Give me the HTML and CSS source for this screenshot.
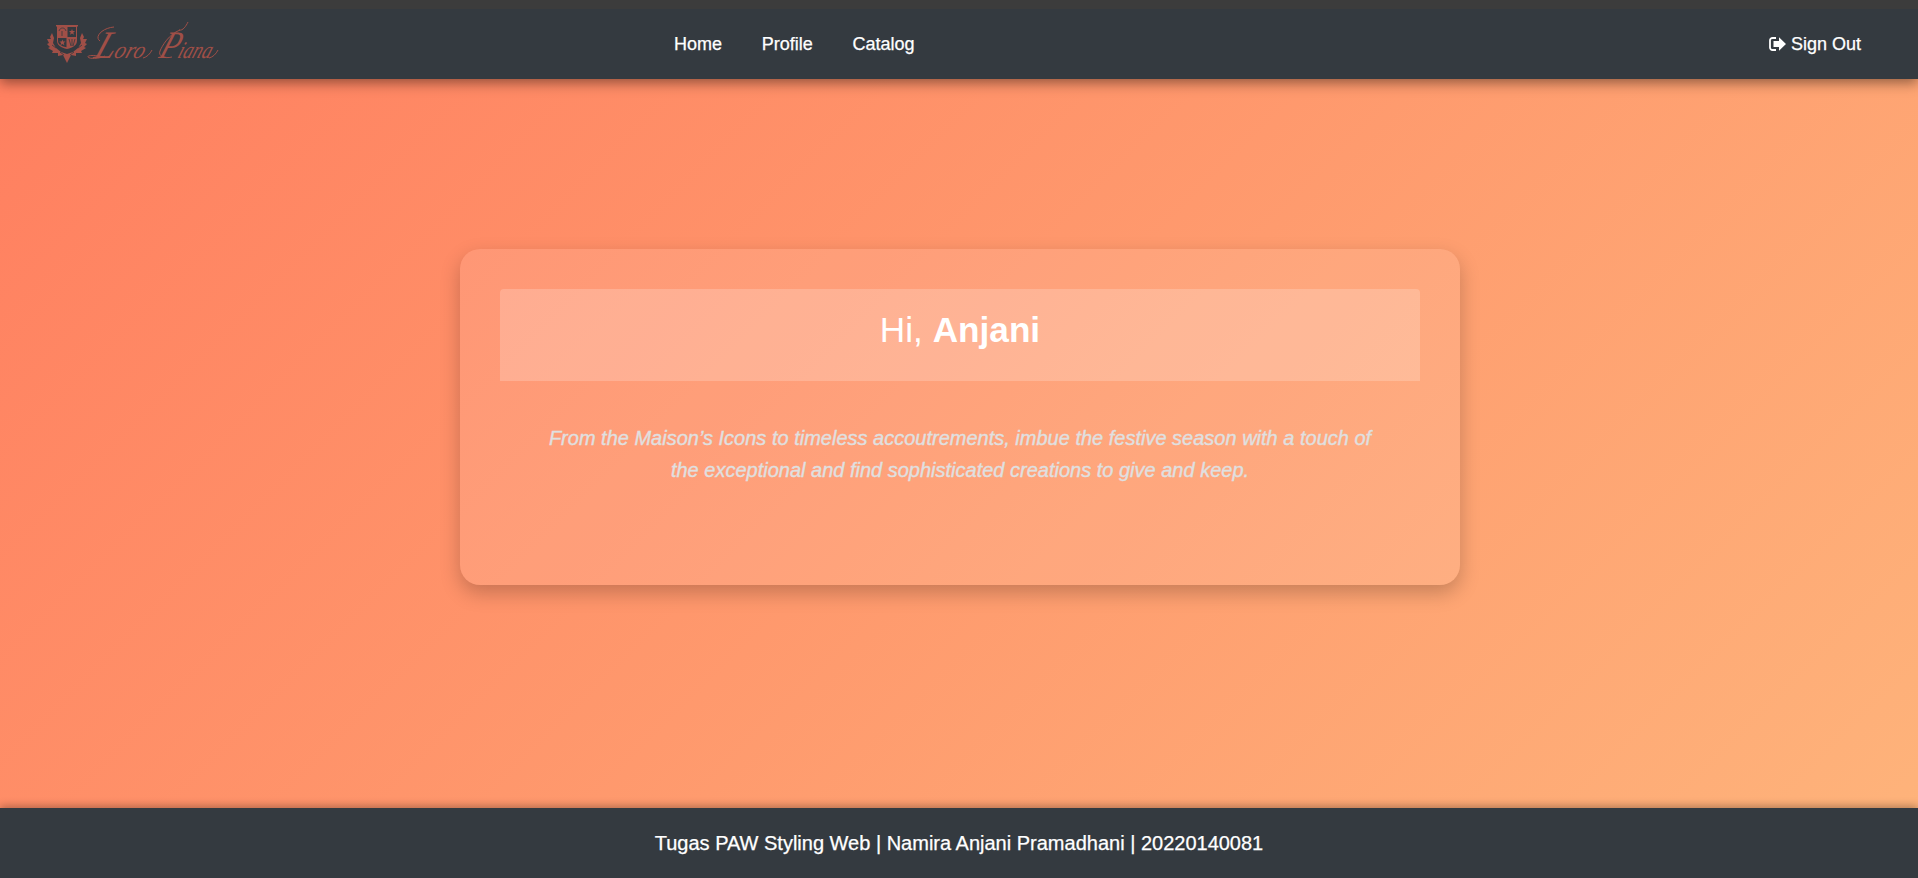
FILE: index.html
```
<!DOCTYPE html>
<html lang="en">
<head>
<meta charset="utf-8">
<title>Loro Piana</title>
<link rel="stylesheet" href="styles.css">
</head>
<body>
<div class="topstrip"></div>
<header class="navbar">
  <a class="brand">
    <svg class="logo" viewBox="0 0 180 50" width="180" height="50">
      <g fill="#a04f47">
        <path d="M16 6h22v1.500h-1v14c0 5-4 7-10 8.500c-6-1.500-10-3.500-10-8.500v-14h-1z"/>
        <path fill="#343a40" d="M27.500 8H36v10h-8.500zM18 19h8.500v9.300c-6-1.400-8.500-3-8.500-6.500z"/>
        <path d="M32 10l.8 2h2.300l-1.800 1.500.7 2.300-2-1.400-2 1.400.7-2.300-1.800-1.500h2.300zM22.400 20.500l.8 2h2.300l-1.800 1.500.7 2.300-2-1.400-2 1.400.7-2.300-1.800-1.500h2.300z"/>
        <path d="M12 14l2 5-1 5 3 5 5 4 6 2 6-2 5-4 3-5-1-5 2-5 2 4-1 2 4 0-2 4 2 1-3 3 2 1-5 3 1 2-6 0 0 3-5-1-2 4-2 4-2-4-2-4-5 1 0-3-6 0 1-2-5-3 2-1-3-3 2-1-2-4 4 0-1-2z"/>
      </g>
      <g class="veins">
        <path d="M22 17v-5M19 12c1-4 6-4 7 0M29 20l2 7M32 20v7M35 20l-2 7M20 33l4 3M34 33l-4 3M12 26l4 3M42 26l-4 3"/>
      </g>
      <g class="flourish">
        <path d="M63 38c-7-2-16-2-15 0s11 2 17-1M60 22c-6-4 2-13 14-14M132 38c-8 2-14-1-12-6s9-17 20-21M139 11c4 1 7-4 9-8M103 39c4-1 7-4 9-8M169 39c4-1 7-4 9-8"/>
      </g>
      <g class="wordmark" transform="translate(14 0) skewX(-20)">
        <text x="53" y="39" textLength="50" lengthAdjust="spacingAndGlyphs"><tspan class="initial">L</tspan>oro</text>
        <text x="118" y="39" textLength="52" lengthAdjust="spacingAndGlyphs"><tspan class="initial">P</tspan>iana</text>
      </g>
    </svg>
  </a>
  <nav class="menu"><a>Home</a><a>Profile</a><a>Catalog</a></nav>
  <a class="signout">
    <svg class="icon" viewBox="0 0 17 14" width="17" height="14"><path d="M7 1H3.500A2.500 2.500 0 0 0 1 3.500v7A2.500 2.500 0 0 0 3.500 13H7" fill="none" stroke="#fff" stroke-width="1.800"/><path d="M10 0.300L17 7l-7 6.700V10H4.500V4H10z" fill="#fff"/></svg>
    Sign Out
  </a>
</header>
<main class="hero">
  <section class="card">
    <h1 class="greeting">Hi, <strong>Anjani</strong></h1>
    <p class="lead">From the Maison’s Icons to timeless accoutrements, imbue the festive season with a touch of the exceptional and find sophisticated creations to give and keep.</p>
  </section>
</main>
<footer class="footer">Tugas PAW Styling Web | Namira Anjani Pramadhani | 20220140081</footer>
</body>
</html>
```
FILE: styles.css
```
* { box-sizing: border-box; }
body {
  margin: 0;
  height: 878px;
  display: flex;
  flex-direction: column;
  overflow: hidden;
  font-family: "Liberation Sans", Arial, sans-serif;
  color: #fff;
  background: linear-gradient(135deg, #ff7e5f, #feb47b);
}
.topstrip {
  position: relative;
  z-index: 1;
  height: 9px;
  background: #3c3c3c;
}
.navbar {
  height: 70px;
  padding: 0 57px 0 40px;
  display: grid;
  grid-template-columns: 634px 1fr auto;
  align-items: center;
  background: #343a40;
  box-shadow: 0 4px 12px rgba(0, 0, 0, .42);
  font-size: 18px;
  -webkit-text-stroke: .25px;
}
.brand { display: flex; }
.logo { display: block; overflow: visible; -webkit-text-stroke: 0; }
.veins { fill: none; stroke: #343a40; stroke-width: .8; }
.flourish { fill: none; stroke: #a04f47; stroke-width: 1; }
.wordmark {
  font: italic 24px "Liberation Serif", serif;
  fill: #a04f47;
}
.wordmark .initial { font-size: 39px; }
.menu { display: flex; gap: 39.7px; }
.signout { display: flex; align-items: center; gap: 5px; }
.hero {
  flex: 1;
  display: flex;
  justify-content: center;
  align-items: flex-start;
  padding: 170px 0 0 2px;
}
.card {
  width: 1000px;
  height: 336px;
  padding: 40px;
  border-radius: 20px;
  background: rgba(255, 255, 255, .1);
  box-shadow: 0 8px 20px rgba(0, 0, 0, .22);
  text-align: center;
}
.greeting {
  margin: 0;
  height: 92px;
  padding-top: 20px;
  border-radius: 4px 4px 0 0;
  background: rgba(255, 255, 255, .2);
  font-size: 35.2px;
  font-weight: 400;
  line-height: 42px;
}
.lead {
  margin: 41px 40px 0;
  font-size: 20px;
  font-style: italic;
  line-height: 32px;
  color: #e0e0e0;
  -webkit-text-stroke: .35px;
}
.footer {
  height: 70px;
  background: #343a40;
  box-shadow: 0 -2px 8px rgba(0, 0, 0, .3);
  font-size: 20px;
  line-height: 71px;
  text-align: center;
  -webkit-text-stroke: .25px;
}
```
